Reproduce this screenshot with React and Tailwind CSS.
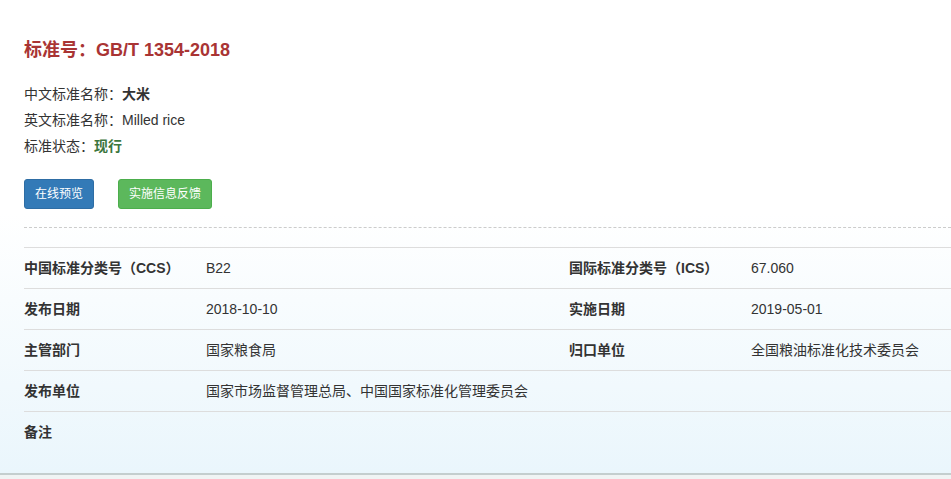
import React from "react";

const rows = [
  [["中国标准分类号（CCS）", "B22"], ["国际标准分类号（ICS）", "67.060"]],
  [["发布日期", "2018-10-10"], ["实施日期", "2019-05-01"]],
  [["主管部门", "国家粮食局"], ["归口单位", "全国粮油标准化技术委员会"]],
  [["发布单位", "国家市场监督管理总局、中国国家标准化管理委员会"], null],
  [["备注", ""], null],
];

export default function App() {
  return (
    <div
      className="w-[951px] h-[479px] overflow-hidden bg-[#f0f4f4] text-[#333]"
      style={{ fontFamily: '"Liberation Sans", "Noto Sans CJK SC", sans-serif' }}
    >
      <div className="bg-linear-to-b from-white from-45% to-[#eaf6fc] border-b-2 border-[#c4cece] pl-6 pt-[37px] pb-[21px]">
        <h1 className="text-[18px] leading-[26px] font-bold text-[#a93434]">
          标准号：GB/T 1354-2018
        </h1>

        <div className="mt-[18px] text-[14px] leading-[26px]">
          <div>
            中文标准名称：<span className="font-bold">大米</span>
          </div>
          <div>英文标准名称：Milled rice</div>
          <div>
            标准状态：<span className="font-bold text-[#3c763d]">现行</span>
          </div>
        </div>

        <div className="mt-5 flex gap-6">
          <button className="h-[30px] px-[10px] rounded-[3px] bg-[#337ab7] border border-[#2e6da4] text-white text-[12px]">
            在线预览
          </button>
          <button className="h-[30px] px-[10px] rounded-[3px] bg-[#5cb85c] border border-[#4cae4c] text-white text-[12px]">
            实施信息反馈
          </button>
        </div>

        <div className="mt-[18px] border-t border-dashed border-[#ccc]" />

        <div className="mt-[19px] text-[14px]">
          {rows.map((row, i) => (
            <div key={i} className="flex h-[41px] items-center border-t border-[#ddd]">
              <div className="w-[182px] font-bold">{row[0][0]}</div>
              <div className="w-[363px]">{row[0][1]}</div>
              {row[1] && (
                <>
                  <div className="w-[182px] font-bold">{row[1][0]}</div>
                  <div>{row[1][1]}</div>
                </>
              )}
            </div>
          ))}
        </div>
      </div>
    </div>
  );
}
